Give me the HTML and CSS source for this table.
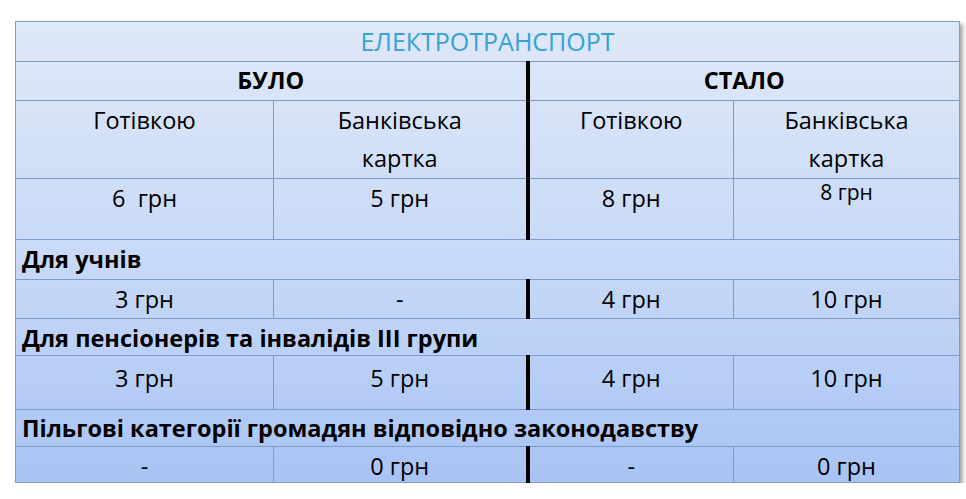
FILE: index.html
```html
<!DOCTYPE html>
<html lang="uk">
<head>
<meta charset="utf-8">
<link rel="stylesheet" href="styles.css">
</head>
<body>
<table class="fares">
  <colgroup>
    <col class="c1"><col class="c2"><col class="c3"><col class="c4">
  </colgroup>
  <tr class="r-title"><td colspan="4" class="title">ЕЛЕКТРОТРАНСПОРТ</td></tr>
  <tr class="r-period"><td colspan="2" class="period split">БУЛО</td><td colspan="2" class="period">СТАЛО</td></tr>
  <tr class="r-head"><td>Готівкою</td><td class="split">Банківська<br>картка</td><td>Готівкою</td><td>Банківська<br>картка</td></tr>
  <tr class="r-base"><td>6&nbsp; грн</td><td class="split">5 грн</td><td>8 грн</td><td class="small">8 грн</td></tr>
  <tr class="r-cat1"><td colspan="4" class="cat">Для учнів</td></tr>
  <tr class="r-val1"><td>3 грн</td><td class="split">-</td><td>4 грн</td><td>10 грн</td></tr>
  <tr class="r-cat2"><td colspan="4" class="cat">Для пенсіонерів та інвалідів ІІІ групи</td></tr>
  <tr class="r-val2"><td>3 грн</td><td class="split">5 грн</td><td>4 грн</td><td>10 грн</td></tr>
  <tr class="r-cat3"><td colspan="4" class="cat">Пільгові категорії громадян відповідно законодавству</td></tr>
  <tr class="r-val3"><td>-</td><td class="split">0 грн</td><td>-</td><td>0 грн</td></tr>
</table>
</body>
</html>
```

FILE: styles.css
```css
html, body {
  margin: 0;
  padding: 0;
  background: #ffffff;
}
body {
  padding: 21px 0 0 15px;
  font-family: "Open Sans", "Noto Sans", sans-serif;
  color: #000000;
}
.fares {
  width: 944px;
  table-layout: fixed;
  border-collapse: collapse;
  background: linear-gradient(to bottom, #dfe8f8 0%, #c8daf7 50%, #a8c3f4 100%);
  box-shadow: 3px 3px 4px rgba(0, 0, 0, 0.35);
  font-size: 23.5px;
}
.c1 { width: 258px; }
.c2 { width: 254px; }
.c3 { width: 206px; }
.c4 { width: 226px; }
.fares td {
  border: 1px solid #7d9cc8;
  padding: 6px 4px 0;
  text-align: center;
  vertical-align: top;
  line-height: 26px;
  white-space: nowrap;
}
.fares td.split {
  border-right: 4px solid #000000;
}
.r-title { height: 40px; }
.r-period { height: 39px; }
.r-head { height: 78px; }
.r-base { height: 61px; }
.r-cat1 { height: 40px; }
.r-val1 { height: 39px; }
.r-cat2 { height: 37px; }
.r-val2 { height: 54px; }
.r-cat3 { height: 37px; }
.r-val3 { height: 36px; }

.r-title td { padding-top: 6px; }
.r-period td { padding-top: 5px; }
.r-head td { padding-top: 0; line-height: 38px; }
.r-base td { padding-top: 6px; }
.r-cat1 td { padding-top: 6px; }
.r-val1 td { padding-top: 6px; }
.r-cat2 td { padding-top: 6px; }
.r-val2 td { padding-top: 9px; }
.r-cat3 td { padding-top: 5px; }
.r-val3 td { padding-top: 6px; }

.fares td.title {
  color: #34a2d6;
  font-size: 25px;
}
.fares td.period {
  font-weight: bold;
}
.fares td.cat {
  text-align: left;
  font-weight: bold;
  padding-left: 6px;
}
.fares .r-base td.small {
  font-size: 21px;
  line-height: 24px;
  padding-top: 1px;
}
```
